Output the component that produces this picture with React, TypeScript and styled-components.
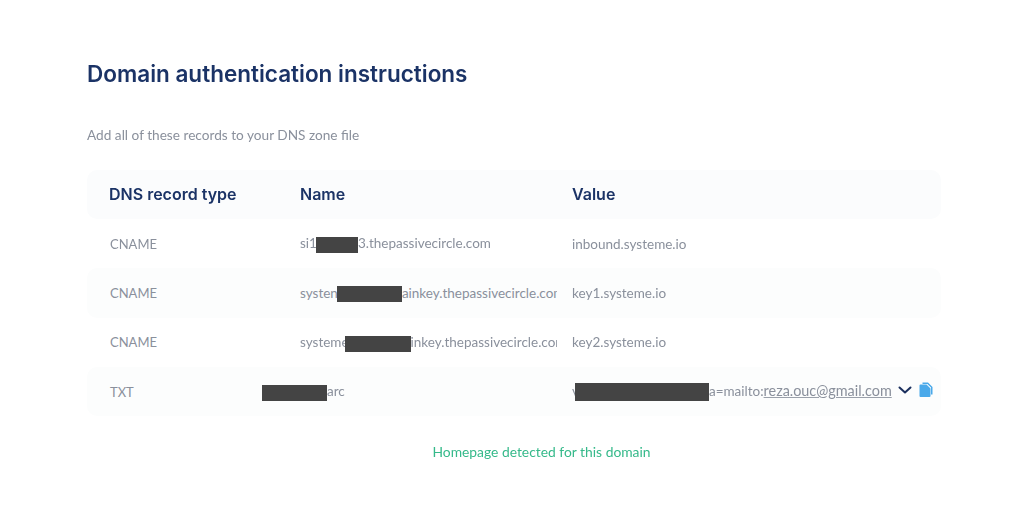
import React from "react";
import styled, { createGlobalStyle } from "styled-components";

const Global = createGlobalStyle`
  html, body { margin: 0; padding: 0; background: #fff; }
  body { font-family: Lato, "Open Sans", sans-serif; }
`;

const Page = styled.div`
  width: 1024px;
  height: 527px;
  padding: 60px 83px 0 87px;
  box-sizing: border-box;
  overflow: hidden;
  filter: blur(0.4px);
`;

const Title = styled.h1`
  margin: 0;
  font: 600 22.5px/27px Inter, sans-serif;
  color: #1b3366;
`;

const Subtitle = styled.p`
  margin: 40px 0 0;
  font-size: 13.65px;
  line-height: 16px;
  color: #8a909c;
`;

const Table = styled.div`
  margin-top: 27px;
  display: flex;
  flex-direction: column;
`;

const Row = styled.div<{ $shade?: string; $h?: number }>`
  display: grid;
  grid-template-columns: 213px 272px 1fr;
  align-items: center;
  height: ${(p) => p.$h ?? 49.3}px;
  border-radius: 10px;
  background: ${(p) => p.$shade ?? "#fff"};
`;

const HeadCell = styled.div<{ $first?: boolean }>`
  font: 600 16px/20px Inter, sans-serif;
  color: #1b3366;
  margin-top: -2px;
  padding-left: ${(p) => (p.$first ? "22px" : "0")};
`;

const TypeCell = styled.div`
  padding-left: 23px;
  font-size: 13px;
  color: #8a909c;
`;

const NameCell = styled.div<{ $shift?: number }>`
  width: ${(p) => 257 + (p.$shift ?? 0)}px;
  margin-left: ${(p) => -(p.$shift ?? 0)}px;
  overflow: hidden;
  font-size: 13.5px;
  line-height: 18px;
  white-space: nowrap;
  color: #8a909c;
`;

const ValueCell = styled.div`
  position: relative;
  font-size: 13.5px;
  line-height: 18px;
  white-space: nowrap;
  color: #8a909c;
`;

const Redaction = styled.span<{ $width: number; $height?: number; $pull?: number }>`
  display: inline-block;
  vertical-align: middle;
  width: ${(p) => p.$width}px;
  height: ${(p) => p.$height ?? 16}px;
  margin-left: ${(p) => -(p.$pull ?? 0)}px;
  background: #444;
`;

const Mail = styled.span`
  font-size: 14.4px;
  text-decoration: underline;
  text-decoration-color: #9aa0aa;
  text-underline-offset: 1px;
`;

const Icons = styled.span`
  position: absolute;
  left: 325px;
  top: 0;
  display: flex;
  align-items: center;
  gap: 6px;
`;

const Status = styled.p`
  margin: 28px 0 0 55px;
  text-align: center;
  font-size: 13.85px;
  line-height: 16px;
  color: #35b98a;
`;

const Chevron = () => (
  <svg width="16" height="16" viewBox="0 0 16 16" fill="none">
    <path d="M2.5 5.5 8 10.5 13.5 5.5" stroke="#1b2f5e" strokeWidth="2" strokeLinecap="round" strokeLinejoin="round" />
  </svg>
);

const CopyIcon = () => (
  <svg width="14" height="16" viewBox="0 0 14 16" fill="#4aa9ea">
    <path d="M3.5 0.5H9L13.5 5V12.5H12V5.6L8.4 2H3.5Z" />
    <path d="M1.5 2.5H7.5L11.5 6.5V14a1 1 0 0 1-1 1H1.5a1 1 0 0 1-1-1V3.5a1 1 0 0 1 1-1Z" />
  </svg>
);

const HEAD_SHADE = "#fbfcfd";
const ROW_SHADE = "#fcfdfd";

export default function App() {
  return (
    <>
      <Global />
      <Page>
        <Title>Domain authentication instructions</Title>
        <Subtitle>Add all of these records to your DNS zone file</Subtitle>
        <Table>
          <Row $shade={HEAD_SHADE} $h={49}>
            <HeadCell $first>DNS record type</HeadCell>
            <HeadCell>Name</HeadCell>
            <HeadCell>Value</HeadCell>
          </Row>
          <Row>
            <TypeCell>CNAME</TypeCell>
            <NameCell>
              si1<Redaction $width={42} $pull={1} />3.thepassivecircle.com
            </NameCell>
            <ValueCell>inbound.systeme.io</ValueCell>
          </Row>
          <Row $shade={ROW_SHADE}>
            <TypeCell>CNAME</TypeCell>
            <NameCell>
              systen<Redaction $width={65} $pull={1} />ainkey.thepassivecircle.com
            </NameCell>
            <ValueCell>key1.systeme.io</ValueCell>
          </Row>
          <Row>
            <TypeCell>CNAME</TypeCell>
            <NameCell>
              systeme<Redaction $width={66} $pull={4} />inkey.thepassivecircle.com
            </NameCell>
            <ValueCell>key2.systeme.io</ValueCell>
          </Row>
          <Row $shade={ROW_SHADE}>
            <TypeCell>TXT</TypeCell>
            <NameCell $shift={38}>
              <Redaction $width={65} />arc
            </NameCell>
            <ValueCell>
              v<Redaction $width={134} $height={18} $pull={4} />a=mailto:<Mail>reza.ouc@gmail.com</Mail>
              <Icons>
                <Chevron />
                <CopyIcon />
              </Icons>
            </ValueCell>
          </Row>
        </Table>
        <Status>Homepage detected for this domain</Status>
      </Page>
    </>
  );
}
